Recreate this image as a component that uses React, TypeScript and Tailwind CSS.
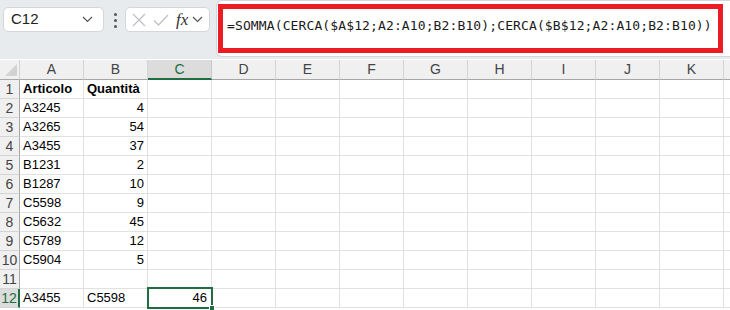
import React from "react";

const cols = ["A", "B", "C", "D", "E", "F", "G", "H", "I", "J", "K"];

type Row = { a?: string; b?: string; c?: string; bold?: boolean; bLeft?: boolean };
const rows: Row[] = [
  { a: "Articolo", b: "Quantità", bold: true, bLeft: true },
  { a: "A3245", b: "4" },
  { a: "A3265", b: "54" },
  { a: "A3455", b: "37" },
  { a: "B1231", b: "2" },
  { a: "B1287", b: "10" },
  { a: "C5598", b: "9" },
  { a: "C5632", b: "45" },
  { a: "C5789", b: "12" },
  { a: "C5904", b: "5" },
  {},
  { a: "A3455", b: "C5598", c: "46", bLeft: true },
];

function Chevron({ className }: { className?: string }) {
  return (
    <svg width="11" height="7" viewBox="0 0 11 7" className={className}>
      <path d="M1 1l4.5 4.5L10 1" fill="none" stroke="#555" strokeWidth="1.2" />
    </svg>
  );
}

export default function App() {
  return (
    <div
      className="w-[730px] h-[310px] overflow-hidden bg-white relative"
      style={{ fontFamily: '"Liberation Sans", Arial, sans-serif' }}
    >
      {/* toolbar */}
      <div className="h-[59px] bg-[#e8ebee] flex items-start">
        <div className="ml-[3px] mt-[7px] w-[101px] h-[25px] bg-white border border-[#d3d6da] rounded-[5px] flex items-center justify-between pl-[7px] pr-[10px]">
          <span className="text-[15px] text-[#222]">C12</span>
          <Chevron />
        </div>
        <div className="ml-[10px] mt-[13px] w-[3px] flex flex-col gap-[3px]">
          <div className="w-[3px] h-[3px] bg-[#555] rounded-full" />
          <div className="w-[3px] h-[3px] bg-[#555] rounded-full" />
          <div className="w-[3px] h-[3px] bg-[#555] rounded-full" />
        </div>
        <div className="ml-[8px] mt-[7px] w-[85px] h-[25px] bg-white border border-[#d3d6da] rounded-[5px] flex items-center pl-[5px]">
          <svg width="16" height="16" viewBox="0 0 16 16">
            <path d="M2 2l12 12M14 2L2 14" stroke="#bfc2c5" strokeWidth="1.3" fill="none" />
          </svg>
          <svg width="18" height="16" viewBox="0 0 18 16" className="ml-[5px]">
            <path d="M2 8.5l4.5 4.5L16 3" stroke="#bfc2c5" strokeWidth="1.3" fill="none" />
          </svg>
          <span
            className="ml-[6px] text-[17px] italic text-[#333] leading-none"
            style={{ fontFamily: '"Liberation Serif", "Times New Roman", serif' }}
          >
            fx
          </span>
          <Chevron className="ml-[4px]" />
        </div>
        <div className="ml-[6px] h-[57px] flex-1 bg-white border border-[#d3d6da] rounded-l-[6px] border-r-0 pl-[1px] pt-[3px]">
          <div className="w-[505px] h-[49px] border-[5px] border-[#ec1c24] pl-[4px] pt-[4px]">
            <span
              className="text-[13px] text-[#1a1a1a] leading-none tracking-[0.12px]"
              style={{ fontFamily: '"DejaVu Sans Mono", monospace' }}
            >
              =SOMMA(CERCA($A$12;A2:A10;B2:B10);CERCA($B$12;A2:A10;B2:B10))
            </span>
          </div>
        </div>
      </div>

      {/* grid */}
      <div className="mt-[1px] grid grid-cols-[20px_repeat(11,64px)_1fr] text-[13px] text-black">
        {/* header row */}
        <div className="h-[20px] bg-[#f0f0f0] border-r border-b border-[#d4d4d4] border-b-[#a6a6a6] relative">
          <svg width="12" height="12" viewBox="0 0 12 12" className="absolute right-[2px] bottom-[3px]">
            <path d="M12 0V12H0z" fill="#d2d2d2" />
          </svg>
        </div>
        {cols.map((c) => (
          <div
            key={c}
            className={
              c === "C"
                ? "h-[20px] bg-[#dcdcdc] border-r border-[#c8c8c8] border-b-2 border-b-[#1e6e42] flex items-center justify-center text-[14px] text-[#1e6e42]"
                : "h-[20px] bg-[#f0f0f0] border-r border-[#d4d4d4] border-b border-b-[#a6a6a6] flex items-center justify-center text-[14px] text-[#444]"
            }
          >
            {c}
          </div>
        ))}
        <div className="h-[20px] bg-[#f0f0f0] border-b border-b-[#a6a6a6]" />

        {rows.map((r, i) => {
          const n = i + 1;
          const sel = n === 12;
          return (
            <React.Fragment key={n}>
              <div
                className={
                  sel
                    ? "h-[19px] bg-[#dcdcdc] border-r-2 border-r-[#1e6e42] border-b border-b-[#d4d4d4] flex items-center justify-center text-[14px] text-[#1e6e42]"
                    : "h-[19px] bg-[#f0f0f0] border-r border-r-[#a6a6a6] border-b border-b-[#d4d4d4] flex items-center justify-center text-[14px] text-[#444]"
                }
              >
                {n}
              </div>
              {cols.map((c) => {
                let content: string | undefined;
                let right = false;
                if (c === "A") content = r.a;
                if (c === "B") {
                  content = r.b;
                  right = !r.bLeft;
                }
                if (c === "C") {
                  content = r.c;
                  right = true;
                }
                if (sel && c === "C") {
                  return (
                    <div key={c} className="h-[19px] border-r border-b border-[#e1e1e1] relative">
                      <div className="absolute left-[-1px] top-[-2px] w-[66px] h-[22px] border-2 border-[#1e6e42] flex items-center justify-end pr-[4px]">
                        {content}
                      </div>
                      <div className="absolute right-[-4px] bottom-[-4px] w-[6px] h-[6px] bg-[#1e6e42] border border-white" />
                    </div>
                  );
                }
                return (
                  <div
                    key={c}
                    className={
                      "h-[19px] border-r border-b border-[#e1e1e1] flex items-center px-[3px] whitespace-nowrap " +
                      (right ? "justify-end" : "justify-start") +
                      (r.bold ? " font-bold" : "")
                    }
                  >
                    {content}
                  </div>
                );
              })}
              <div className="h-[19px] border-b border-[#e1e1e1]" />
            </React.Fragment>
          );
        })}
      </div>
    </div>
  );
}
